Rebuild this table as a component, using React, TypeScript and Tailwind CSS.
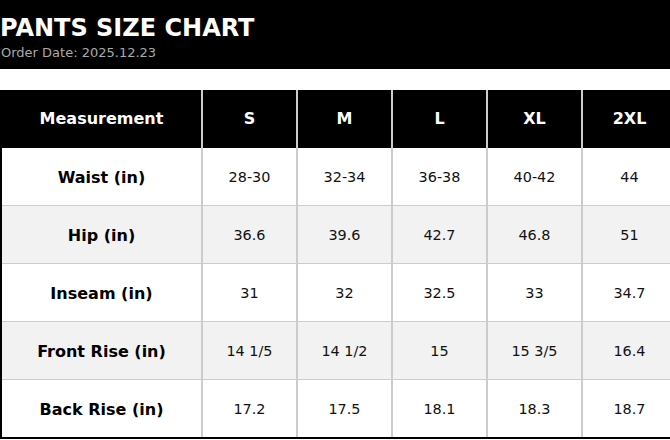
const sizes = ["S", "M", "L", "XL", "2XL"];

const rows: { label: string; values: string[] }[] = [
  { label: "Waist (in)", values: ["28-30", "32-34", "36-38", "40-42", "44"] },
  { label: "Hip (in)", values: ["36.6", "39.6", "42.7", "46.8", "51"] },
  { label: "Inseam (in)", values: ["31", "32", "32.5", "33", "34.7"] },
  { label: "Front Rise (in)", values: ["14 1/5", "14 1/2", "15", "15 3/5", "16.4"] },
  { label: "Back Rise (in)", values: ["17.2", "17.5", "18.1", "18.3", "18.7"] },
];

export default function App() {
  return (
    <div
      className="w-[670px] h-[440px] overflow-hidden bg-white"
      style={{ fontFamily: '"DejaVu Sans", Verdana, sans-serif' }}
    >
      {/* Title bar */}
      <header className="bg-black pt-[14px] pb-[8px]">
        <h1 className="text-white font-bold text-[24px] leading-[28px]">PANTS SIZE CHART</h1>
        <p className="text-[#aaaaaa] text-[13px] leading-[16px] mt-[3px] pl-[1px]">
          Order Date: 2025.12.23
        </p>
      </header>

      {/* Chart */}
      <div className="mt-[21px] w-[676px] border-l-2 border-b-2 border-black">
        <div className="grid grid-cols-[199px_repeat(5,95px)] h-[58px] bg-black text-white font-bold text-[16px]">
          <div className="flex items-center justify-center">Measurement</div>
          {sizes.map((s) => (
            <div key={s} className="flex items-center justify-center border-l-2 border-[#cccccc]">
              {s}
            </div>
          ))}
        </div>

        {rows.map((row, i) => (
          <div
            key={row.label}
            className={
              "grid grid-cols-[199px_repeat(5,95px)] " +
              (i % 2 === 1 ? "bg-[#f2f2f2] " : "bg-white ") +
              (i < rows.length - 1 ? "h-[58px] border-b border-[#cccccc]" : "h-[57px]")
            }
          >
            <div className="flex items-center justify-center pt-[2px] font-bold text-[16px] text-black">
              {row.label}
            </div>
            {row.values.map((v, j) => (
              <div
                key={j}
                className="flex items-center justify-center pt-[2px] border-l-2 border-[#cccccc] text-[14.4px] text-[#111111]"
              >
                {v}
              </div>
            ))}
          </div>
        ))}
      </div>
    </div>
  );
}
